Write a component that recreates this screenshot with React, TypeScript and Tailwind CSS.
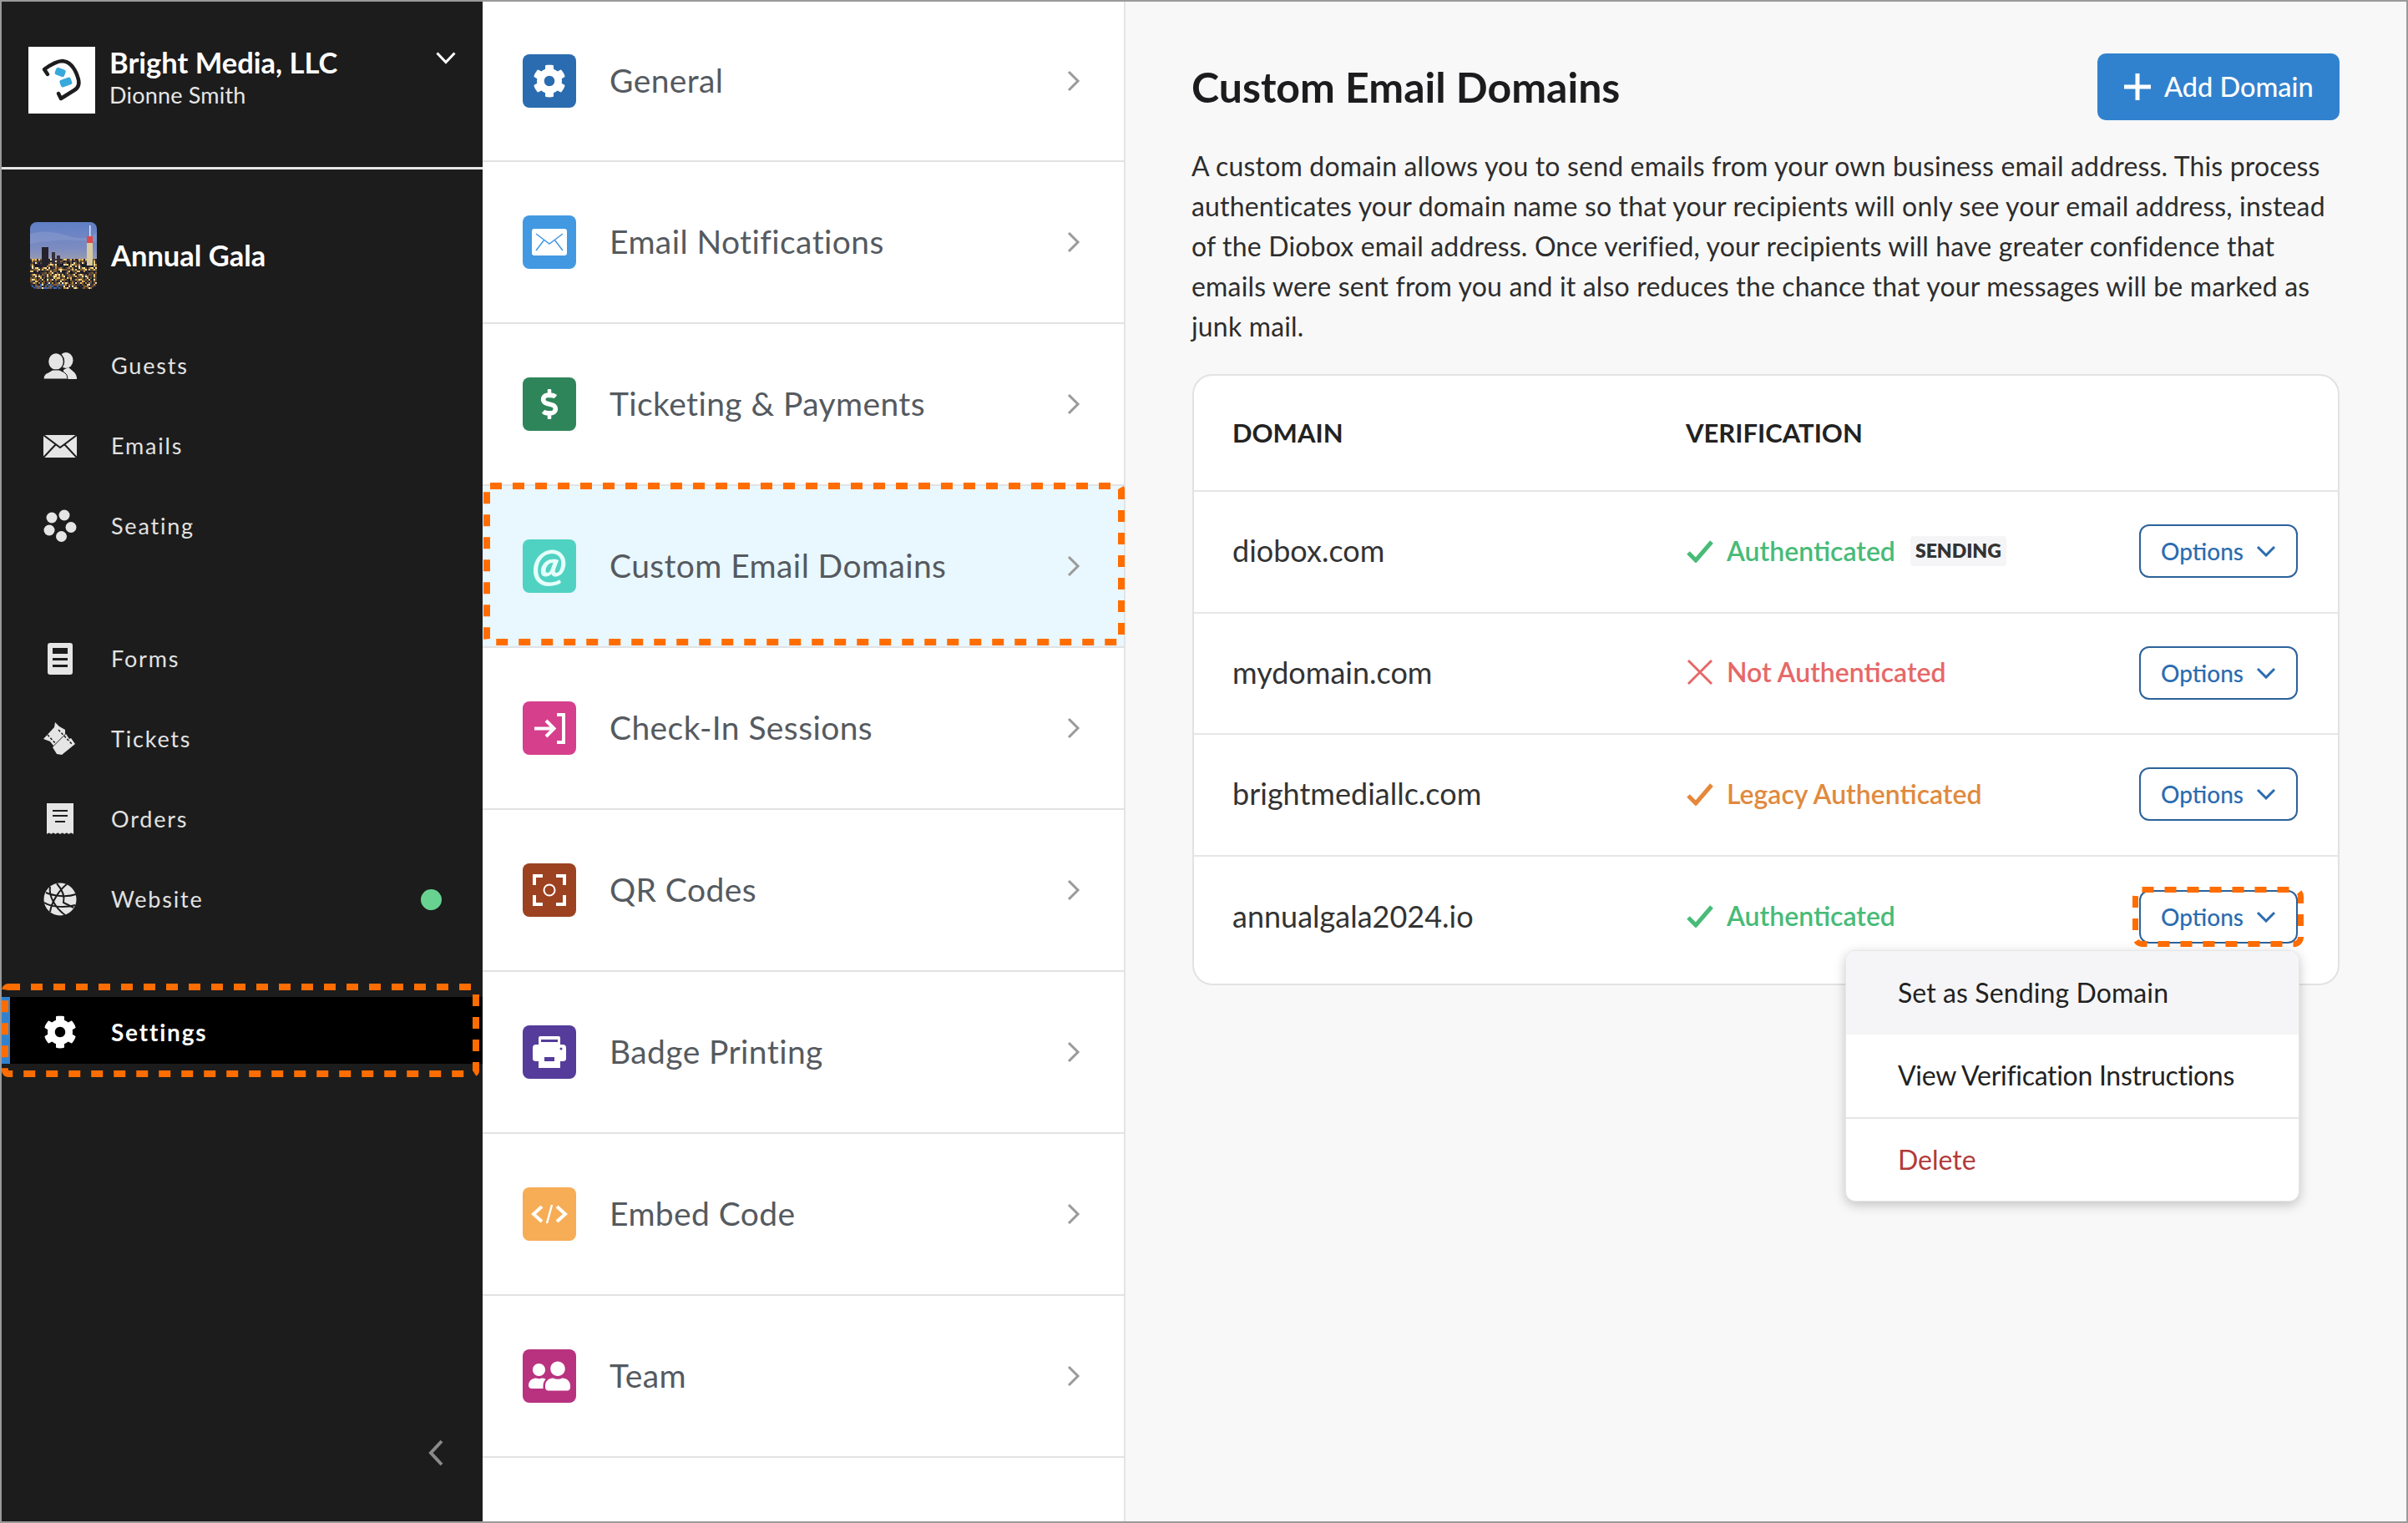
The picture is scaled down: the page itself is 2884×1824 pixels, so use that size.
import React from "react";
import { FaCog, FaDollarSign, FaUserFriends } from "react-icons/fa";

function Dash({ w, h, rx = 4, sw = 7, className }: { w: number; h: number; rx?: number; sw?: number; className: string }) {
  return (
    <svg width={w} height={h} viewBox={`0 0 ${w} ${h}`} className={`absolute pointer-events-none ${className}`}>
      <rect x={sw / 2} y={sw / 2} width={w - sw} height={h - sw} rx={rx} fill="none" stroke="#ff6d00" strokeWidth={sw} strokeDasharray="14 13" />
    </svg>
  );
}

function Logo() {
  return (
    <div className="w-[80px] h-[80px] bg-white shrink-0 flex items-center justify-center">
      <svg width="80" height="80" viewBox="0 0 80 80">
        <path d="M23 33 L19 27 C26 22 34 17 41 17 C50 18 56 27 59 36 C62 44 60 49 55 52 L39 62 L36 56" fill="none" stroke="#1d1d1f" strokeWidth="4.500" strokeLinejoin="round" strokeLinecap="round" />
        <rect x="32" y="26" width="12" height="9" rx="2.500" fill="#38a9dc" transform="rotate(20 38 31)" />
        <rect x="38" y="38" width="14" height="9" rx="2.500" fill="#38a9dc" transform="rotate(-20 45 43)" />
      </svg>
    </div>
  );
}

function Photo() {
  const bs: React.ReactNode[] = [];
  const cols = ["#e8c26a", "#8a5f2c", "#2e2a38", "#b98a3e", "#57493f", "#f8e6a8", "#1f1d2c", "#3c3530", "#7a5a34", "#26232f", "#4a4038", "#191822"];
  let seed = 17;
  for (let i = 0; i < 40; i++) {
    for (let j = 0; j < 18; j++) {
      seed = (seed * 137 + 59) % 1009;
      const bottom = j > 14 && i < 20;
      const c = bottom && seed % 3 === 0 ? ["#3c67b5", "#8fb8e8", "#5aa58a"][seed % 9 % 3] : cols[seed % 12];
      bs.push(<rect key={`${i}-${j}`} x={i * 2} y={44 + j * 2} width="2" height="2" fill={c} />);
    }
  }
  return (
    <svg width="80" height="80" viewBox="0 0 80 80" className="rounded-[8px] shrink-0">
      <defs>
        <linearGradient id="sky" x1="0" y1="0" x2="0" y2="1">
          <stop offset="0" stopColor="#5f7fc6" />
          <stop offset="0.7" stopColor="#7d8cc0" />
          <stop offset="1" stopColor="#9a9db0" />
        </linearGradient>
      </defs>
      <rect width="80" height="80" fill="#2a2638" />
      <rect width="80" height="46" fill="url(#sky)" />
      <path d="M0 14 Q20 8 44 16 T80 12 V24 Q40 18 0 26 Z" fill="#8c9ccf" opacity="0.5" />
      {bs}
      <rect x="14" y="30" width="8" height="22" fill="#25222c" />
      <rect x="26" y="36" width="4" height="14" fill="#35303c" />
      <rect x="32" y="40" width="4" height="10" fill="#35303c" />
      <rect x="68" y="18" width="7" height="34" fill="#d8c9a0" />
      <rect x="68" y="17" width="7" height="8" fill="#dd4a4a" />
      <rect x="71" y="4" width="1.500" height="13" fill="#dfe8ff" />
    </svg>
  );
}

const GUESTS = (
  <svg width="40" height="32" viewBox="0 0 40 32">
    <ellipse cx="27" cy="9.500" rx="8.500" ry="9.500" fill="#e5e5e5" />
    <path d="M24 21 L30 18 L37 24 Q40 27 40 32 H24 Z" fill="#e5e5e5" />
    <ellipse cx="15" cy="11" rx="9.500" ry="10.500" fill="#e5e5e5" stroke="#1c1c1c" strokeWidth="1.500" />
    <path d="M0 32 Q0 26 6 24 L11 21 H19 L25 24 Q29 26 29 32 Z" fill="#e5e5e5" stroke="#1c1c1c" strokeWidth="1" />
  </svg>
);
const ENV = (
  <svg width="40" height="27" viewBox="0 0 40 27">
    <rect width="40" height="27" fill="#e5e5e5" />
    <path d="M0 0 L20 15 L40 0 M0 27 L15 11 M40 27 L25 11" fill="none" stroke="#1c1c1c" strokeWidth="2" />
  </svg>
);
const SEAT = (
  <svg width="40" height="40" viewBox="-20 -20 40 40" fill="#e5e5e5">
    <circle cx="-10" cy="-10" r="6.500" /><circle cx="5" cy="-13" r="6.500" /><circle cx="13" cy="1.500" r="6.500" /><circle cx="1.500" cy="12.500" r="6.500" /><circle cx="-13" cy="5" r="6.500" />
  </svg>
);
const FORMS = (
  <svg width="30" height="38" viewBox="0 0 30 38">
    <rect width="30" height="38" rx="3" fill="#e5e5e5" />
    <rect x="6" y="6" width="18" height="7" fill="#1c1c1c" />
    <rect x="6" y="18" width="18" height="3" fill="#1c1c1c" />
    <rect x="6" y="26" width="18" height="3" fill="#1c1c1c" />
  </svg>
);
const TICKETS = (
  <svg width="40" height="40" viewBox="0 0 40 40" fill="#e5e5e5">
    <path d="M0 20 L13 6 L14 0 L19 5 L26 9 L26 14 L12 28 L8 23 Z" />
    <path d="M11 30 L27 14 L31 20 L33 19 L38 26 L22 39 L16 38 Z" />
    <path d="M5 15 L15 26 M18 9 L34 26" stroke="#1c1c1c" strokeWidth="1.500" strokeDasharray="3 2" />
  </svg>
);
const ORDERS = (
  <svg width="32" height="38" viewBox="0 0 32 38">
    <path d="M0 0 H32 V37 Q29 34 26.500 37 Q24 34 21 37 Q19 34 16 37 Q13 34 10.500 37 Q8 34 5 37 Q3 34 0 37 Z" fill="#e5e5e5" />
    <path d="M7 9 H25 M7 15 H25 M10 22 H22" stroke="#1c1c1c" strokeWidth="2" />
  </svg>
);
const GLOBE = (
  <svg width="40" height="40" viewBox="0 0 40 40">
    <circle cx="20" cy="20" r="19.500" fill="#e5e5e5" />
    <path d="M3 12 C12 16 28 18 39 14 M1 24 C10 30 28 30 38 27 M8 5 C6 16 14 30 26 39 M28 2 C20 8 10 22 8 35 M16 1 C22 8 26 16 24 24 L36 30" fill="none" stroke="#1c1c1c" strokeWidth="2" />
  </svg>
);

const navA = [
  { t: "Guests", i: GUESTS },
  { t: "Emails", i: ENV },
  { t: "Seating", i: SEAT },
];
const navB = [
  { t: "Forms", i: FORMS },
  { t: "Tickets", i: TICKETS },
  { t: "Orders", i: ORDERS },
  { t: "Website", i: GLOBE, dot: true },
];

function NavRow({ t, i, dot }: { t: string; i: React.ReactNode; dot?: boolean }) {
  return (
    <div className="h-[96px] flex items-center">
      <div className="w-[40px] ml-[50px] flex justify-center shrink-0">{i}</div>
      <span className="ml-[41px] text-[27px] tracking-[1.8px] text-[#e2e2e2]">{t}</span>
      {dot && <span className="ml-auto mr-[49px] w-[25px] h-[25px] rounded-full bg-[#68d391]" />}
    </div>
  );
}

function Sidebar() {
  return (
    <aside className="w-[576px] shrink-0 bg-[#1c1c1c] flex flex-col text-white">
      <div className="h-[201px] border-b-[3px] border-[#e6e6e6] pl-[32px] pr-[32px] pt-[54px] flex items-start">
        <Logo />
        <div className="ml-[17px] flex flex-col -mt-[2px]">
          <span className="text-[34.500px] leading-[42px] font-bold">Bright Media, LLC</span>
          <span className="text-[27px] leading-[36px] tracking-[0.2px] text-[#e6e6e6]">Dionne Smith</span>
        </div>
        <svg width="24" height="15" viewBox="0 0 24 15" className="ml-auto mt-[6px]">
          <path d="M1.500 1.500 L12 12.500 L22.500 1.500" fill="none" stroke="#fff" strokeWidth="3" />
        </svg>
      </div>
      <div className="h-[187px] flex items-center pl-[34px] pt-[19px]">
        <Photo />
        <span className="ml-[17px] text-[34.500px] font-bold">Annual Gala</span>
      </div>
      <div className="flex flex-col">
        {navA.map((n) => <NavRow key={n.t} {...n} />)}
      </div>
      <div className="flex flex-col mt-[63px]">
        {navB.map((n) => <NavRow key={n.t} {...n} />)}
      </div>
      <div className="relative mt-[69px] h-[80px] bg-black border-l-[10px] border-[#3182ce] flex items-center pt-[4px]">
        <div className="w-[40px] ml-[40px] flex justify-center shrink-0"><FaCog size={40} color="#fff" /></div>
        <span className="ml-[41px] text-[28px] tracking-[1.8px] font-bold text-white">Settings</span>
        <Dash w={572} h={112} className="-left-[10px] -top-[16px]" sw={8} />
      </div>
      <div className="mt-auto pb-[66px] pl-[510px]">
        <svg width="20" height="32" viewBox="0 0 20 32">
          <path d="M17 2 L4 16 L17 30" fill="none" stroke="#8a8a8a" strokeWidth="4" />
        </svg>
      </div>
    </aside>
  );
}

function Tile({ c, children }: { c: string; children: React.ReactNode }) {
  return <div className={`w-[64px] h-[64px] rounded-[8px] flex items-center justify-center shrink-0 ${c}`}>{children}</div>;
}

const menu = [
  { t: "General", c: "bg-[#2b6cb0]", i: <FaCog size={40} color="#fff" /> },
  {
    t: "Email Notifications", c: "bg-[#4299e1]",
    i: (
      <svg width="42" height="32" viewBox="0 0 42 32">
        <rect width="42" height="32" rx="3" fill="#fff" />
        <path d="M5 6 L21 18 L37 6 M5 26 L15 13 M37 26 L27 13" fill="none" stroke="#4299e1" strokeWidth="1.500" />
      </svg>
    ),
  },
  { t: "Ticketing & Payments", c: "bg-[#2f855a]", i: <FaDollarSign size={36} color="#fff" /> },
  { t: "Custom Email Domains", c: "bg-[#50d2c2]", i: <span className="text-[54px] leading-none italic font-black text-[#e6fffa] -mt-[4px]">@</span> },
  {
    t: "Check-In Sessions", c: "bg-[#d53f8c]",
    i: (
      <svg width="37" height="37" viewBox="0 0 37 37" fill="none" stroke="#fff" strokeWidth="4">
        <path d="M0 18.500 H23 M14 9 L23.500 18.500 L14 28 M27 2 H35 V35 H27" />
      </svg>
    ),
  },
  {
    t: "QR Codes", c: "bg-[#9c4221]",
    i: (
      <svg width="40" height="38" viewBox="0 0 40 38" fill="none" stroke="#fff">
        <path d="M12 2 H2 V13 M28 2 H38 V13 M12 36 H2 V25 M28 36 H38 V25" strokeWidth="4" />
        <circle cx="20" cy="19" r="6.500" strokeWidth="2" />
      </svg>
    ),
  },
  {
    t: "Badge Printing", c: "bg-[#553c9a]",
    i: (
      <svg width="40" height="38" viewBox="0 0 40 38">
        <path d="M7 10 V2 Q7 0 9 0 H31 Q33 0 33 2 V10 H36 Q40 10 40 14 V27 Q40 30 36 30 H33 V38 H7 V30 H4 Q0 30 0 27 V14 Q0 10 4 10 Z" fill="#fff" />
        <rect x="10" y="4" width="20" height="3" fill="#553c9a" />
        <rect x="14" y="25" width="12" height="5" fill="#553c9a" />
        <circle cx="34" cy="15" r="1.500" fill="#553c9a" />
      </svg>
    ),
  },
  {
    t: "Embed Code", c: "bg-[#f6ad55]",
    i: (
      <svg width="44" height="24" viewBox="0 0 44 24" fill="none" stroke="#fff" strokeWidth="4">
        <path d="M13 3 L3 12 L13 21 M31 3 L41 12 L31 21" />
        <path d="M25 1 L19 23" strokeWidth="2.500" />
      </svg>
    ),
  },
  { t: "Team", c: "bg-[#b83280]", i: <FaUserFriends size={50} color="#fff" className="-scale-x-100" /> },
];

function MiddleMenu() {
  return (
    <nav className="w-[770px] shrink-0 bg-white border-r-2 border-[#e4e4e4] flex flex-col">
      {menu.map((m, idx) => {
        const active = m.t === "Custom Email Domains";
        return (
          <div key={m.t} className={`relative ${idx === 0 ? "h-[192px]" : "h-[194px]"} border-b-2 border-[#e2e2e2] flex items-center pl-[48px] pr-[52px] ${active ? "bg-[#e9f7fe]" : "bg-white"}`}>
            <Tile c={m.c}>{m.i}</Tile>
            <span className="ml-[40px] -mt-[2px] text-[39px] tracking-[0.4px] text-[#555a60]">{m.t}</span>
            <svg width="16" height="26" viewBox="0 0 16 26" className="ml-auto">
              <path d="M2 2 L13 13 L2 24" fill="none" stroke="#9a9a9a" strokeWidth="3" />
            </svg>
            {active && <Dash w={768} h={195} sw={8} className="left-[1px] -top-[4px]" />}
          </div>
        );
      })}
    </nav>
  );
}

const Chev = () => (
  <svg width="24" height="14" viewBox="0 0 24 14">
    <path d="M2 2 L12 12 L22 2" fill="none" stroke="#2b6cb0" strokeWidth="3" />
  </svg>
);
const Check = ({ c }: { c: string }) => (
  <svg width="34" height="28" viewBox="0 0 34 28">
    <path d="M3 16 L12 25 L31 3" fill="none" stroke={c} strokeWidth="5" />
  </svg>
);
const Cross = () => (
  <svg width="34" height="32" viewBox="0 0 34 32">
    <path d="M3 2 L31 30 M31 2 L3 30" fill="none" stroke="#e66868" strokeWidth="3" />
  </svg>
);

function Options() {
  return (
    <div className="w-[190px] h-[64px] rounded-[12px] border-2 border-[#2c6299] flex items-center pl-[24px] text-[28px] text-[#2b6cb0] font-medium bg-white">
      <span>Options</span>
      <span className="ml-[15px] flex"><Chev /></span>
    </div>
  );
}

function Row({ d, icon, label, color, tag, last, extra }: { d: string; icon: React.ReactNode; label: string; color: string; tag?: boolean; last?: boolean; extra?: React.ReactNode }) {
  return (
    <div className={`flex items-start pl-[46px] pr-[48px] ${last ? "h-[152px] pt-[40px]" : "h-[145.500px] pt-[39px] border-b-2 border-[#e6e6e6]"}`}>
      <div className="w-[543px] h-[62px] flex items-center text-[36px] text-[#333]">{d}</div>
      <div className="flex-1 h-[63px] flex items-center">
        <span className="w-[49px] flex">{icon}</span>
        <span className={`text-[32px] font-semibold ${color}`}>{label}</span>
        {tag && <span className="ml-[18px] h-[36px] px-[6px] rounded-[4px] bg-[#f5f5f7] text-[23px] font-extrabold text-[#333] flex items-center">SENDING</span>}
      </div>
      <div className="relative">
        <Options />
        {extra}
      </div>
    </div>
  );
}

function Content() {
  return (
    <main className="flex-1 bg-[#f8f8f8] pl-[79px] pr-[80px] pt-[62px]">
      <div className="flex items-center justify-between h-[80px]">
        <h1 className="text-[50px] font-bold text-[#1c1c1e]">Custom Email Domains</h1>
        <button className="w-[290px] h-[80px] rounded-[10px] bg-[#3182ce] flex items-center pl-[31px] text-white text-[32.500px] font-medium">
          <svg width="34" height="34" viewBox="0 0 34 34" className="mr-[15px]">
            <path d="M17 1 V33 M1 17 H33" stroke="#fff" strokeWidth="5" />
          </svg>
          Add Domain
        </button>
      </div>
      <p className="mt-[31px] max-w-[1360px] text-[32px] leading-[48px] tracking-[0.17px] text-[#2d2d2d]">
        A custom domain allows you to send emails from your own business email address. This process authenticates your domain name so that your recipients will only see your email address, instead of the Diobox email address. Once verified, your recipients will have greater confidence that emails were sent from you and it also reduces the chance that your messages will be marked as junk mail.
      </p>
      <div className="relative mt-[33px] ml-[1px] w-[1374px] rounded-[24px] border-2 border-[#e2e2e2] bg-white">
        <div className="h-[139px] border-b-2 border-[#e6e6e6] flex items-center pl-[46px] text-[31px] font-bold text-[#222]">
          <span className="w-[543px]">DOMAIN</span>
          <span>VERIFICATION</span>
        </div>
        <Row d="diobox.com" icon={<Check c="#48bb78" />} label="Authenticated" color="text-[#48bb78]" tag />
        <Row d="mydomain.com" icon={<Cross />} label="Not Authenticated" color="text-[#e66868]" />
        <Row d="brightmediallc.com" icon={<Check c="#e5883a" />} label="Legacy Authenticated" color="text-[#e08a3e]" />
        <Row
          d="annualgala2024.io"
          icon={<Check c="#48bb78" />}
          label="Authenticated"
          color="text-[#48bb78]"
          last
          extra={
            <>
              <Dash w={205} h={72} sw={7} className="-left-[8px] -top-[4px]" rx={8} />
              <div className="absolute z-10 top-[72px] right-[-2px] w-[544px] rounded-[12px] bg-white border border-[#e6e6e6] shadow-[0_4px_14px_rgba(0,0,0,0.22)] overflow-hidden text-[32px] text-[#222]">
                <div className="h-[100px] bg-[#f5f5f7] flex items-center pl-[62px] tracking-[0.1px]">Set as Sending Domain</div>
                <div className="h-[101px] border-b-2 border-[#e6e6e6] flex items-center pl-[62px] tracking-[-0.3px]">View Verification Instructions</div>
                <div className="h-[98px] flex items-center pl-[62px] text-[#b23a3a]">Delete</div>
              </div>
            </>
          }
        />
      </div>
    </main>
  );
}

export default function App() {
  return (
    <div className="w-[2884px] h-[1824px] border-2 border-[#9a9a9a] flex overflow-hidden font-['Lato',sans-serif]">
      <Sidebar />
      <MiddleMenu />
      <Content />
    </div>
  );
}
